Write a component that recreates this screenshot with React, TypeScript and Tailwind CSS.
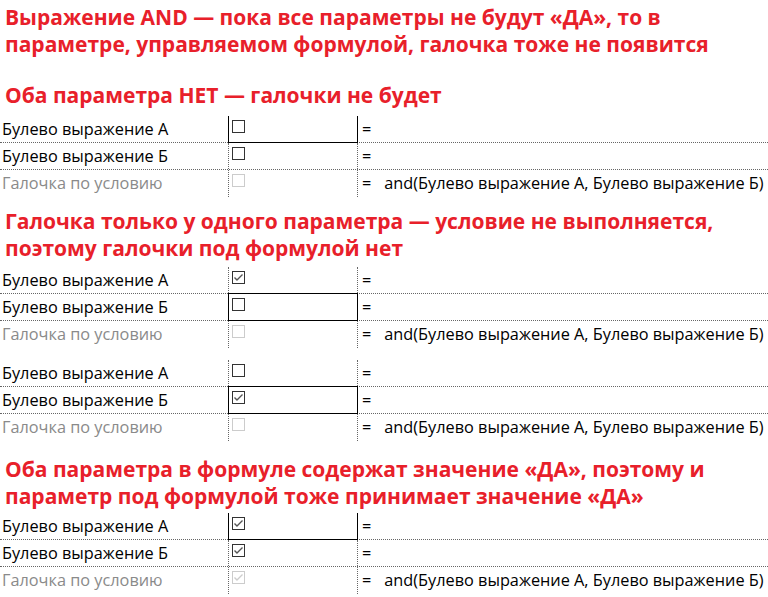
import React from 'react'

type Row = { label: string; checked: boolean; disabled?: boolean; formula?: boolean }
type Focus = 'none' | 'open' | 'full'

const A = 'Булево выражение А'
const B = 'Булево выражение Б'
const C = 'Галочка по условию'

const CheckBox: React.FC<{ checked: boolean; disabled?: boolean }> = ({ checked, disabled }) => (
  <span
    className={`flex h-[13px] w-[13px] items-center justify-center border ${
      disabled ? 'border-[#cccccc]' : 'border-[#333333]'
    }`}
  >
    {checked && (
      <svg width="11" height="11" viewBox="0 0 11 11">
        <polyline
          points="1.5,5.5 4,8 9.5,2.5"
          fill="none"
          stroke={disabled ? '#cccccc' : '#555555'}
          strokeWidth="1.4"
        />
      </svg>
    )}
  </span>
)

const Table: React.FC<{ rows: Row[]; focus: number; focusType: Focus; className?: string }> = ({
  rows,
  focus,
  focusType,
  className
}) => (
  <div className={`flex flex-col ${className ?? ''}`}>
    {rows.map((r, i) => (
      <div
        key={i}
        className={`grid h-[27px] grid-cols-[228px_130px_1fr] items-stretch ${
          i < rows.length - 1 ? 'border-b border-dotted border-[#666666]' : ''
        }`}
      >
        <div className={`flex items-center pl-[2px] ${r.disabled ? 'text-[#8a8a8a]' : 'text-black'}`}>
          {r.label}
        </div>
        <div className="relative border-x border-dotted border-[#666666] pl-[3px] pt-[4px]">
          <CheckBox checked={r.checked} disabled={r.disabled} />
          {focus === i && focusType === 'open' && (
            <div className="pointer-events-none absolute -left-px -right-px top-0 -bottom-px border-x border-b border-black" />
          )}
          {focus === i && focusType === 'full' && (
            <div className="pointer-events-none absolute -left-px -right-px -top-px -bottom-px border border-black" />
          )}
        </div>
        <div className="flex items-center pl-[4px] text-black">
          <span>=</span>
          {r.formula && <span className="ml-[13px]">and({A}, {B})</span>}
        </div>
      </div>
    ))}
  </div>
)

const Heading: React.FC<{ children: React.ReactNode; className?: string }> = ({ children, className }) => (
  <h2 className={`pl-[5px] text-[21px] font-bold leading-[27px] text-[#e8202a] ${className ?? ''}`}>{children}</h2>
)

export default function App() {
  return (
    <div
      className="flex h-[597px] w-[768px] flex-col overflow-hidden bg-white text-[16.3px]"
      style={{ fontFamily: '"Open Sans", "Noto Sans", sans-serif' }}
    >
      <Heading className="mt-[4px]">
        Выражение AND — пока все параметры не будут «ДА», то в
        <br />
        параметре, управляемом формулой, галочка тоже не появится
      </Heading>
      <Heading className="mt-[24px]">Оба параметра НЕТ — галочки не будет</Heading>
      <Table
        className="mt-[7px]"
        focus={0}
        focusType="open"
        rows={[
          { label: A, checked: false },
          { label: B, checked: false },
          { label: C, checked: false, disabled: true, formula: true }
        ]}
      />
      <Heading className="mt-[11px]">
        Галочка только у одного параметра — условие не выполняется,
        <br />
        поэтому галочки под формулой нет
      </Heading>
      <Table
        className="mt-[5px]"
        focus={1}
        focusType="full"
        rows={[
          { label: A, checked: true },
          { label: B, checked: false },
          { label: C, checked: false, disabled: true, formula: true }
        ]}
      />
      <Table
        className="mt-[12px]"
        focus={1}
        focusType="full"
        rows={[
          { label: A, checked: false },
          { label: B, checked: true },
          { label: C, checked: false, disabled: true, formula: true }
        ]}
      />
      <Heading className="mt-[15px]">
        Оба параметра в формуле содержат значение «ДА», поэтому и
        <br />
        параметр под формулой тоже принимает значение «ДА»
      </Heading>
      <Table
        className="mt-[3px]"
        focus={0}
        focusType="open"
        rows={[
          { label: A, checked: true },
          { label: B, checked: true },
          { label: C, checked: true, disabled: true, formula: true }
        ]}
      />
    </div>
  )
}
